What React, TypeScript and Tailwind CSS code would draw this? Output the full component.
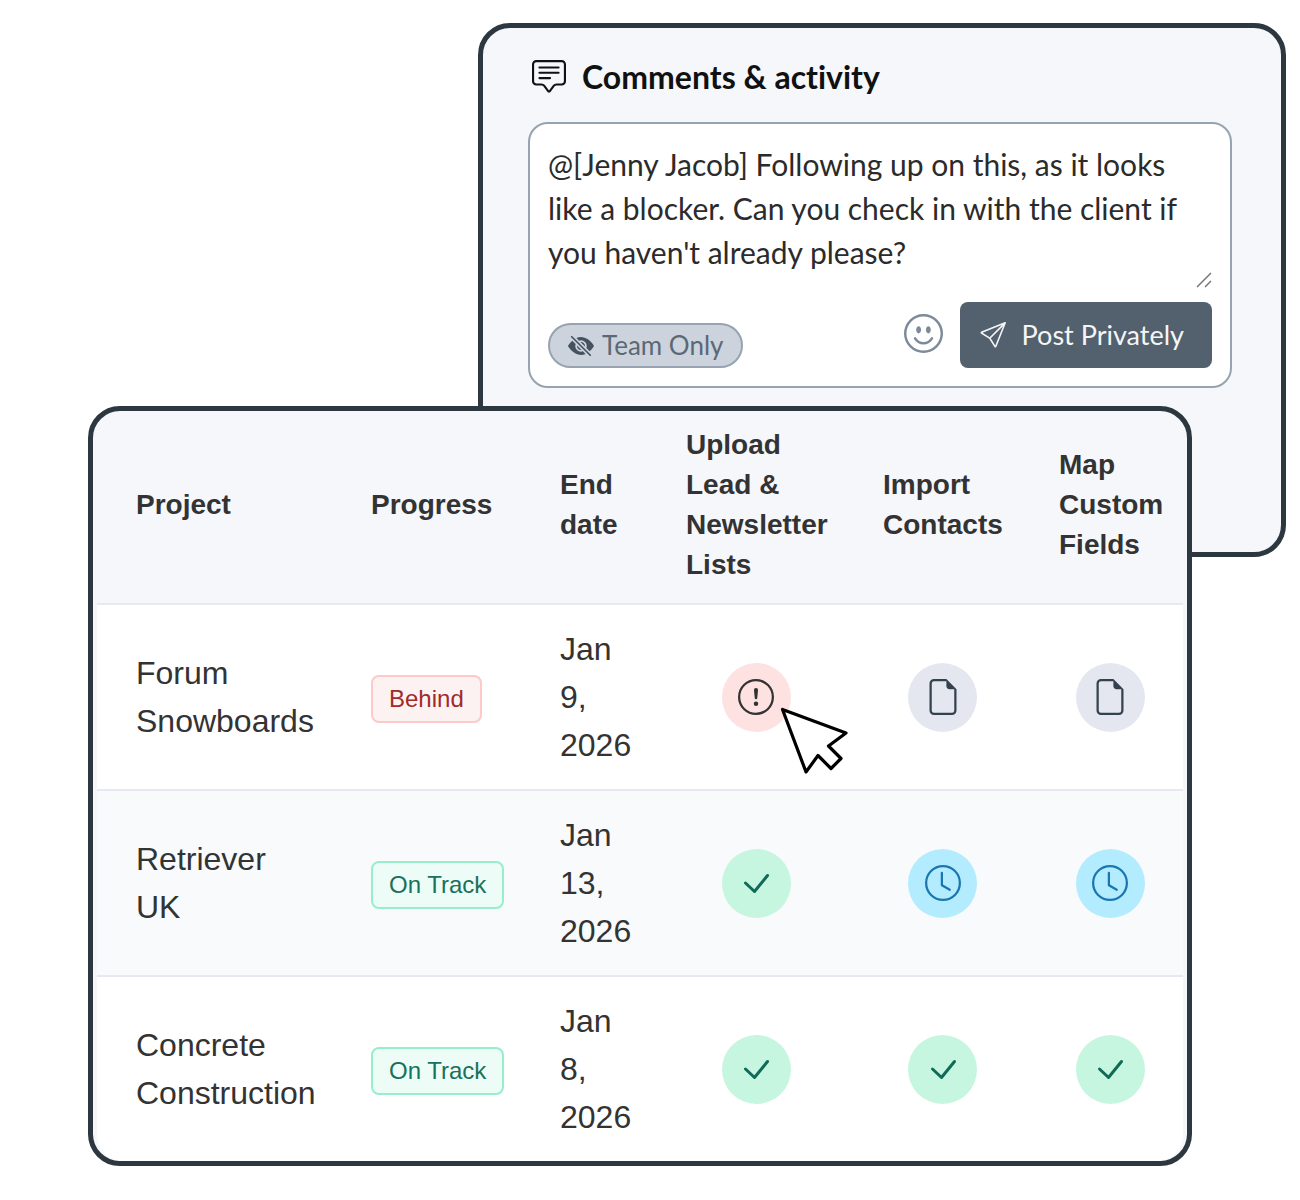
import React from 'react';
import {
  BsChatSquareText,
  BsClock,
  BsEmojiSmile,
  BsExclamationCircle,
  BsEyeSlashFill,
  BsFileEarmark,
  BsSend,
} from 'react-icons/bs';

type StepStatus = 'blocked' | 'todo' | 'waiting' | 'done';

interface Project {
  name: string;
  progress: 'Behind' | 'On Track';
  endDate: string;
  steps: StepStatus[];
}

const columns = [
  { label: 'Project', width: 'w-[246px]' },
  { label: 'Progress', width: 'w-[189px]' },
  { label: 'End date', width: 'w-[126px]' },
  { label: 'Upload Lead & Newsletter Lists', width: 'w-[197px]' },
  { label: 'Import Contacts', width: 'w-[176px]' },
  { label: 'Map Custom Fields', width: 'w-[152px]' },
];

const projects: Project[] = [
  { name: 'Forum Snowboards', progress: 'Behind', endDate: 'Jan 9, 2026', steps: ['blocked', 'todo', 'todo'] },
  { name: 'Retriever UK', progress: 'On Track', endDate: 'Jan 13, 2026', steps: ['done', 'waiting', 'waiting'] },
  { name: 'Concrete Construction', progress: 'On Track', endDate: 'Jan 8, 2026', steps: ['done', 'done', 'done'] },
];

const badgeStyles = {
  Behind: 'border-[#fdc9c9] bg-[#fdf2f2] text-[#a12a2a]',
  'On Track': 'border-[#95efca] bg-[#eefcf7] text-[#16725a]',
};

const stepStyles = {
  blocked: 'bg-[#fee1e1] text-[#333333]',
  todo: 'bg-[#e4e7ef] text-[#34424f]',
  waiting: 'bg-[#b3ecff] text-[#1a76b0]',
  done: 'bg-[#c6f6e0] text-[#0f6b58]',
};

const CheckIcon = () => (
  <svg viewBox="0 0 36 36" className="h-9 w-9" fill="none" aria-hidden="true">
    <path
      d="M7.500 18 16.500 26.500 29.500 10.500"
      stroke="currentColor"
      strokeWidth="3"
      strokeLinecap="round"
      strokeLinejoin="round"
    />
  </svg>
);

const stepIcons = {
  blocked: <BsExclamationCircle size={36} />,
  todo: <BsFileEarmark size={36} />,
  waiting: <BsClock size={36} />,
  done: <CheckIcon />,
};

const CursorIcon = () => (
  <svg viewBox="0 0 68 68" className="absolute top-[44px] left-[58px] h-[68px] w-[68px]" aria-hidden="true">
    <path
      d="M2.500 2.500 26 65 38 48.500 51 61.500 61 51.500 48.500 39 66 26Z"
      fill="#fff"
      stroke="#000"
      strokeWidth="3.200"
      strokeLinejoin="round"
    />
  </svg>
);

const StepIcon: React.FC<{ status: StepStatus }> = ({ status }) => (
  <div className="relative mx-auto h-[69px] w-[69px]">
    <div className={`flex h-full w-full items-center justify-center rounded-full ${stepStyles[status]}`}>
      {stepIcons[status]}
    </div>
    {status === 'blocked' && <CursorIcon />}
  </div>
);

const CommentsCard = () => (
  <section className="ml-[390px] rounded-[32px] border-[5px] border-[#2d373f] bg-[#f5f7fb] pt-[25px] pr-[49px] pb-[164px] pl-[45px] font-['Lato',sans-serif] [font-variant-ligatures:none]">
    <h2 className="flex items-center gap-4 pl-1 text-[32px] leading-[48px] font-bold text-[#111111]">
      <BsChatSquareText size={34} />
      Comments &amp; activity
    </h2>
    <div className="mt-[21px] rounded-[20px] border-2 border-[#97a3b0] bg-white p-[18px]">
      <div className="relative">
        <textarea
          aria-label="Comment"
          rows={3}
          className="block w-full resize-none overflow-hidden text-[30px] leading-[44px] text-[#2b2b2b] outline-none"
          defaultValue="@[Jenny Jacob] Following up on this, as it looks like a blocker. Can you check in with the client if you haven't already please?"
        />
        <svg viewBox="0 0 16 16" className="absolute right-0 -bottom-3.5 h-4 w-4" aria-hidden="true">
          <path d="M1 15 15 1M9 15l6-6" stroke="#777777" strokeWidth="1.500" />
        </svg>
      </div>
      <div className="mt-7 flex items-end">
        <button className="flex h-[45px] items-center gap-2 rounded-full border-2 border-[#97a3b0] bg-[#ccd3dc] px-[18px] text-[26px] text-[#5b6876]">
          <BsEyeSlashFill size={26} className="text-[#44525f]" />
          Team Only
        </button>
        <button aria-label="Add emoji" className="mr-[17px] mb-[15px] ml-auto text-[#7d8a99]">
          <BsEmojiSmile size={39} />
        </button>
        <button className="flex h-[66px] items-center gap-4 rounded-lg bg-[#53606d] pr-7 pl-5 text-[27px] text-[#f3f5f7]">
          <BsSend size={26} />
          Post Privately
        </button>
      </div>
    </div>
  </section>
);

const ProjectsCard = () => (
  <section className="relative -mt-[151px] mr-[94px] overflow-hidden rounded-[32px] border-[5px] border-[#2d373f] bg-[#f5f7fb] px-1 font-['Liberation_Sans',Arial,sans-serif] text-[#333333]">
    <div className="overflow-hidden rounded-b-[26px]">
      <table className="w-full table-fixed text-left">
        <thead>
          <tr>
            {columns.map((column) => (
              <th
                key={column.label}
                className={`${column.width} pt-[14px] pr-4 pb-[18px] pl-7 text-[28px] leading-10 font-bold first:pl-[39px] last:pr-5`}
              >
                {column.label}
              </th>
            ))}
          </tr>
        </thead>
        <tbody>
          {projects.map((project) => (
            <tr key={project.name} className="border-t-2 border-[#e6e9f0] bg-white even:bg-[#f8fafc]">
              <td className="pr-7 pl-[39px] text-[32px] leading-[48px]">{project.name}</td>
              <td className="pt-1 pl-7">
                <span
                  className={`inline-block rounded-lg border-2 px-4 text-2xl leading-[44px] whitespace-nowrap ${badgeStyles[project.progress]}`}
                >
                  {project.progress}
                </span>
              </td>
              <td className="px-7 py-5 text-[32px] leading-[48px]">{project.endDate}</td>
              {project.steps.map((status, i) => (
                <td key={i} className="pr-[29px] pl-7 last:pr-[22px]">
                  <StepIcon status={status} />
                </td>
              ))}
            </tr>
          ))}
        </tbody>
      </table>
    </div>
  </section>
);

export default function App() {
  return (
    <main className="min-h-screen bg-white pt-[23px] pr-[14px] pb-[34px] pl-[88px]">
      <CommentsCard />
      <ProjectsCard />
    </main>
  );
}
